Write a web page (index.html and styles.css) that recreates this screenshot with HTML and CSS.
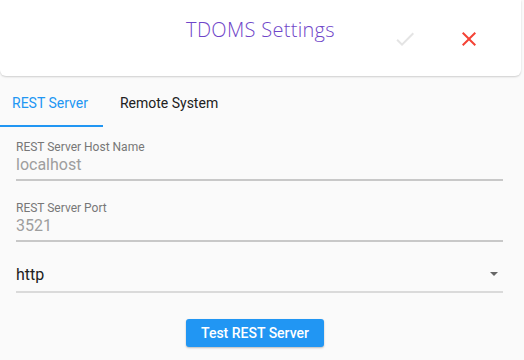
FILE: index.html
```html
<!DOCTYPE html>
<html lang="en">
<head>
  <meta charset="UTF-8">
  <title>TDOMS Settings</title>
  <link rel="stylesheet" href="styles.css">
</head>
<body>
  <div class="header">
    <h1 class="title">TDOMS Settings</h1>
    <div class="actions">
      <button class="icon-btn check" aria-label="Save">
        <svg width="24" height="24" viewBox="0 0 24 24"><path d="M9 16.17L4.83 12l-1.42 1.41L9 19 21 7l-1.41-1.41z" fill="currentColor"/></svg>
      </button>
      <button class="icon-btn close" aria-label="Close">
        <svg width="24" height="24" viewBox="0 0 24 24"><path d="M19 6.41L17.59 5 12 10.59 6.41 5 5 6.41 10.59 12 5 17.59 6.41 19 12 13.41 17.59 19 19 17.59 13.41 12z" fill="currentColor"/></svg>
      </button>
    </div>
  </div>

  <div class="tabs">
    <div class="tab active">REST Server</div>
    <div class="tab">Remote System</div>
  </div>

  <div class="form">
    <div class="field">
      <label>REST Server Host Name</label>
      <div class="value">localhost</div>
    </div>
    <div class="field">
      <label>REST Server Port</label>
      <div class="value">3521</div>
    </div>
    <div class="field select">
      <div class="value">http</div>
      <span class="arrow"></span>
    </div>
    <div class="buttons">
      <button class="primary">Test REST Server</button>
    </div>
  </div>
</body>
</html>
```

FILE: styles.css
```css
body {
  margin: 0;
  background: #fafafa;
  font-family: Roboto, "Liberation Sans", sans-serif;
  width: 524px;
  height: 360px;
  overflow: hidden;
}
.header {
  position: relative;
  width: 521px;
  height: 76px;
  background: #fff;
  border-radius: 0 0 6px 6px;
  box-shadow: 0 1px 2px rgba(0, 0, 0, 0.18);
  display: flex;
  justify-content: center;
}
.title {
  margin: 16px 0 0;
  font-family: "Open Sans", sans-serif;
  font-weight: 300;
  font-size: 20px;
  letter-spacing: 0.3px;
  color: #6f46c9;
}
.actions {
  position: absolute;
  right: 40px;
  top: 27px;
  display: flex;
  gap: 40px;
}
.icon-btn {
  padding: 0;
  border: none;
  background: none;
  width: 24px;
  height: 24px;
}
.icon-btn.check {
  color: #e4e4e4;
}
.icon-btn.close {
  color: #f44336;
}
.tabs {
  display: flex;
  margin-top: 12px;
}
.tab {
  padding: 7px 12px 14px;
  font-size: 14px;
  color: #212121;
  border-bottom: 2px solid transparent;
}
.tab.active {
  color: #2196f3;
  border-color: #2196f3;
  padding-right: 15px;
}
.tab + .tab {
  padding-left: 17px;
}
.form {
  padding: 13px 21px 0 16px;
}
.field {
  border-bottom: 2px solid #c8c8c8;
  margin-bottom: 20px;
}
.field label {
  display: block;
  font-size: 12px;
  color: #777;
  line-height: 14px;
}
.field .value {
  font-size: 16px;
  color: #9e9e9e;
  line-height: 20px;
  padding: 1px 0 4px;
}
.field.select {
  position: relative;
  border-color: #dadada;
  margin-top: 22px;
  margin-bottom: 26px;
}
.field.select .value {
  color: #212121;
  padding-bottom: 6px;
}
.arrow {
  position: absolute;
  right: 5px;
  top: 8px;
  border-left: 4px solid transparent;
  border-right: 4px solid transparent;
  border-top: 4px solid #666;
}
.buttons {
  display: flex;
  justify-content: center;
  padding-right: 9px;
}
.primary {
  height: 28px;
  padding: 0 15px;
  border: none;
  border-radius: 3px;
  background: #2196f3;
  color: #fff;
  font-family: Roboto, sans-serif;
  font-size: 14px;
  font-weight: 500;
  box-shadow: 0 1px 2px rgba(0, 0, 0, 0.25);
}
```
